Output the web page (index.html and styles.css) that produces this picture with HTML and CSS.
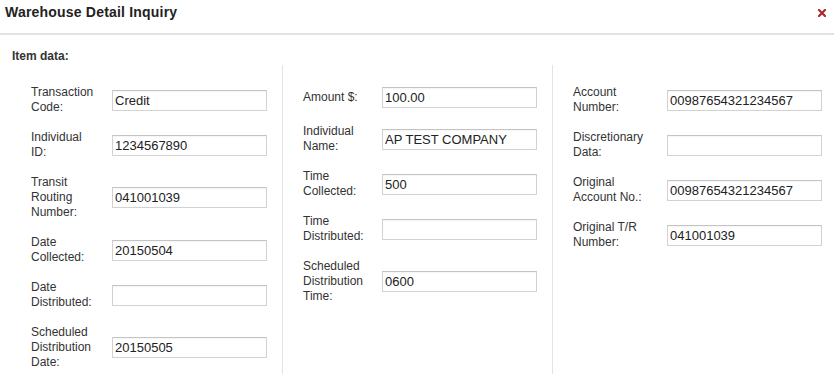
FILE: index.html
```html
<!DOCTYPE html>
<html>
<head>
<meta charset="utf-8">
<link rel="stylesheet" href="styles.css">
<title>Warehouse Detail Inquiry</title>
</head>
<body>
<div class="dialog">
  <div class="dialog-header">
    <h1 class="dialog-title">Warehouse Detail Inquiry</h1>
    <button class="close-btn" aria-label="Close">
      <svg width="8" height="8" viewBox="0 0 8 8"><path d="M1 1L7 7M7 1L1 7" stroke="#b0272b" stroke-width="2.2" stroke-linecap="square"/></svg>
    </button>
  </div>
  <div class="dialog-body">
    <div class="section-title">Item data:</div>
    <div class="columns">
      <div class="col col-1">
        <div class="row"><label class="lbl">Transaction Code:</label><input class="field" value="Credit" readonly></div>
        <div class="row"><label class="lbl">Individual ID:</label><input class="field" value="1234567890" readonly></div>
        <div class="row"><label class="lbl">Transit Routing Number:</label><input class="field" value="041001039" readonly></div>
        <div class="row"><label class="lbl">Date Collected:</label><input class="field" value="20150504" readonly></div>
        <div class="row"><label class="lbl">Date Distributed:</label><input class="field" value="" readonly></div>
        <div class="row"><label class="lbl">Scheduled Distribution Date:</label><input class="field" value="20150505" readonly></div>
      </div>
      <div class="col col-2">
        <div class="row"><label class="lbl">Amount $:</label><input class="field" value="100.00" readonly></div>
        <div class="row"><label class="lbl">Individual Name:</label><input class="field" value="AP TEST COMPANY" readonly></div>
        <div class="row"><label class="lbl">Time Collected:</label><input class="field" value="500" readonly></div>
        <div class="row"><label class="lbl">Time Distributed:</label><input class="field" value="" readonly></div>
        <div class="row"><label class="lbl">Scheduled Distribution Time:</label><input class="field" value="0600" readonly></div>
      </div>
      <div class="col col-3">
        <div class="row"><label class="lbl">Account Number:</label><input class="field" value="00987654321234567" readonly></div>
        <div class="row"><label class="lbl">Discretionary Data:</label><input class="field" value="" readonly></div>
        <div class="row"><label class="lbl">Original Account No.:</label><input class="field" value="00987654321234567" readonly></div>
        <div class="row"><label class="lbl">Original T/R Number:</label><input class="field" value="041001039" readonly></div>
      </div>
    </div>
  </div>
</div>
</body>
</html>
```

FILE: styles.css
```css
html, body {
  margin: 0;
  padding: 0;
  height: 374px;
  overflow: hidden;
  background: #fff;
  font-family: "Liberation Sans", Arial, sans-serif;
  color: #333;
}

.dialog {
  height: 100%;
  display: flex;
  flex-direction: column;
}

.dialog-header {
  height: 35px;
  box-sizing: border-box;
  display: flex;
  align-items: center;
  justify-content: space-between;
  padding: 0 8px 9px 5px;
  border-bottom: 2px solid #e2e2e2;
}

.dialog-title {
  margin: 0;
  font-size: 14px;
  font-weight: bold;
  color: #222;
  letter-spacing: 0.2px;
}

.close-btn {
  border: 0;
  background: none;
  padding: 0;
  width: 8px;
  height: 8px;
  display: flex;
  margin-top: 2px;
}

.dialog-body {
  flex: 1;
  display: flex;
  flex-direction: column;
  padding: 14px 0 0 12px;
}

.section-title {
  font-size: 12px;
  font-weight: bold;
  line-height: 15px;
  color: #333;
}

.columns {
  flex: 1;
  display: flex;
  margin-top: 1px;
}

.col {
  width: 270px;
  box-sizing: border-box;
  padding: 20px 15px 0 19px;
  display: flex;
  flex-direction: column;
  gap: 15px;
}

.col-2, .col-3 {
  border-left: 1px solid #e3e3e3;
  padding-left: 20px;
}

.col-3 {
  flex: 1;
}

.row {
  display: flex;
  align-items: center;
  min-height: 24px;
}

.lbl {
  font-size: 12px;
  line-height: 15px;
  color: #333;
  box-sizing: border-box;
  flex: 0 0 81px;
  padding-right: 15px;
}

.col-2 .lbl {
  flex-basis: 79px;
  padding-right: 13px;
}

.col-3 .lbl {
  flex-basis: 94px;
  padding-right: 14px;
}

.field {
  width: 155px;
  height: 21px;
  box-sizing: border-box;
  border: 1px solid #d2d2d2;
  border-top-color: #c4c4c4;
  box-shadow: inset 0 1px 1px rgba(0, 0, 0, 0.04);
  padding: 0 2px;
  font-family: "Liberation Sans", Arial, sans-serif;
  font-size: 13px;
  color: #222;
  background: #fff;
  outline: none;
  margin: 0;
}
```
